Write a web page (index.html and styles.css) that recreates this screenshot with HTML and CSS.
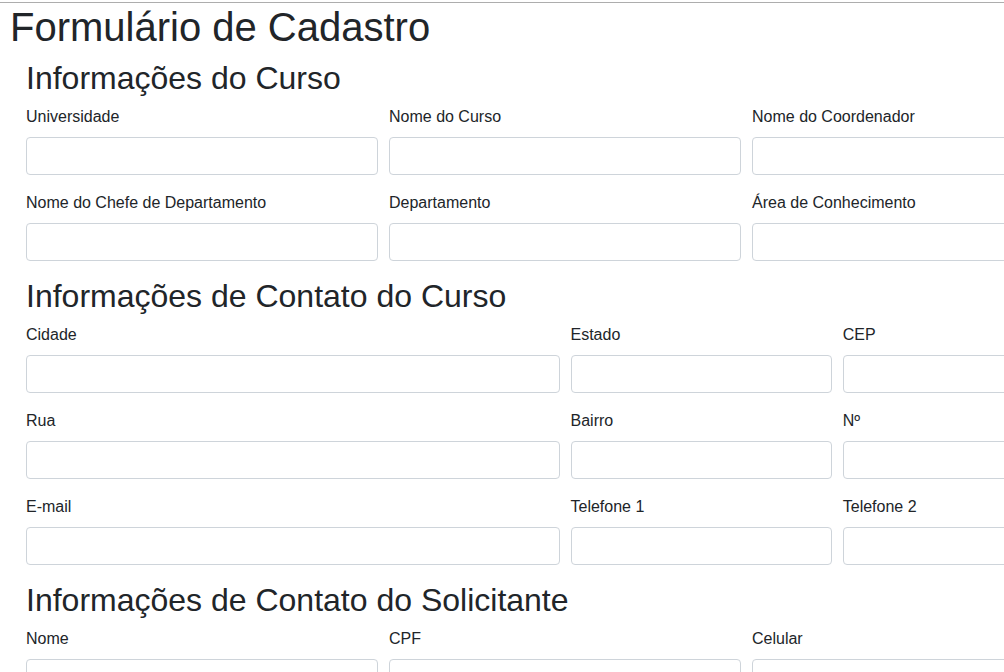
FILE: index.html
```html
<!DOCTYPE html>
<html lang="pt-BR">
<head>
<meta charset="utf-8">
<title>Formulário de Cadastro</title>
<link rel="stylesheet" href="styles.css">
</head>
<body>
<div class="topline"></div>
<main class="page">
  <h1 class="title">Formulário de Cadastro</h1>
  <form class="form">
    <section class="section">
      <h2 class="section-title">Informações do Curso</h2>
      <div class="row">
        <div class="field col-4"><label>Universidade</label><input type="text"></div>
        <div class="field col-4"><label>Nome do Curso</label><input type="text"></div>
        <div class="field col-4"><label>Nome do Coordenador</label><input type="text"></div>
      </div>
      <div class="row">
        <div class="field col-4"><label>Nome do Chefe de Departamento</label><input type="text"></div>
        <div class="field col-4"><label>Departamento</label><input type="text"></div>
        <div class="field col-4"><label>Área de Conhecimento</label><input type="text"></div>
      </div>
    </section>
    <section class="section">
      <h2 class="section-title">Informações de Contato do Curso</h2>
      <div class="row">
        <div class="field col-6"><label>Cidade</label><input type="text"></div>
        <div class="field col-3"><label>Estado</label><input type="text"></div>
        <div class="field col-3"><label>CEP</label><input type="text"></div>
      </div>
      <div class="row">
        <div class="field col-6"><label>Rua</label><input type="text"></div>
        <div class="field col-3"><label>Bairro</label><input type="text"></div>
        <div class="field col-3"><label>Nº</label><input type="text"></div>
      </div>
      <div class="row">
        <div class="field col-6"><label>E-mail</label><input type="text"></div>
        <div class="field col-3"><label>Telefone 1</label><input type="text"></div>
        <div class="field col-3"><label>Telefone 2</label><input type="text"></div>
      </div>
    </section>
    <section class="section">
      <h2 class="section-title">Informações de Contato do Solicitante</h2>
      <div class="row">
        <div class="field col-4"><label>Nome</label><input type="text"></div>
        <div class="field col-4"><label>CPF</label><input type="text"></div>
        <div class="field col-4"><label>Celular</label><input type="text"></div>
      </div>
    </section>
  </form>
</main>
</body>
</html>
```

FILE: styles.css
```css
html, body {
  margin: 0;
  padding: 0;
  background: #fff;
}
body {
  font-family: "Liberation Sans", Arial, sans-serif;
  font-size: 16px;
  line-height: 1.5;
  color: #212529;
}
.topline {
  margin-top: 2px;
  border-top: 1px solid #adadad;
  width: 1104px;
}
.page {
  padding: 0 0 0 10px;
  width: 1094px;
}
.title {
  margin: 0 0 8px 0;
  font-size: 40px;
  font-weight: 500;
  line-height: 48px;
}
.form {
  padding-left: 16px;
  width: 1078px;
}
.section-title {
  margin: 0 0 8px 0;
  font-size: 32px;
  font-weight: 500;
  line-height: 38px;
}
.row {
  display: grid;
  grid-template-columns: repeat(12, 1fr);
  column-gap: 11px;
}
.col-3 { grid-column: span 3; }
.col-4 { grid-column: span 4; }
.col-6 { grid-column: span 6; }
.field {
  display: flex;
  flex-direction: column;
  margin-bottom: 16px;
}
.field label {
  display: block;
  margin-bottom: 8px;
}
.field input {
  box-sizing: border-box;
  height: 38px;
  width: 100%;
  padding: 6px 12px;
  font: inherit;
  color: #495057;
  background: #fff;
  border: 1px solid #ced4da;
  border-radius: 4px;
}
```
